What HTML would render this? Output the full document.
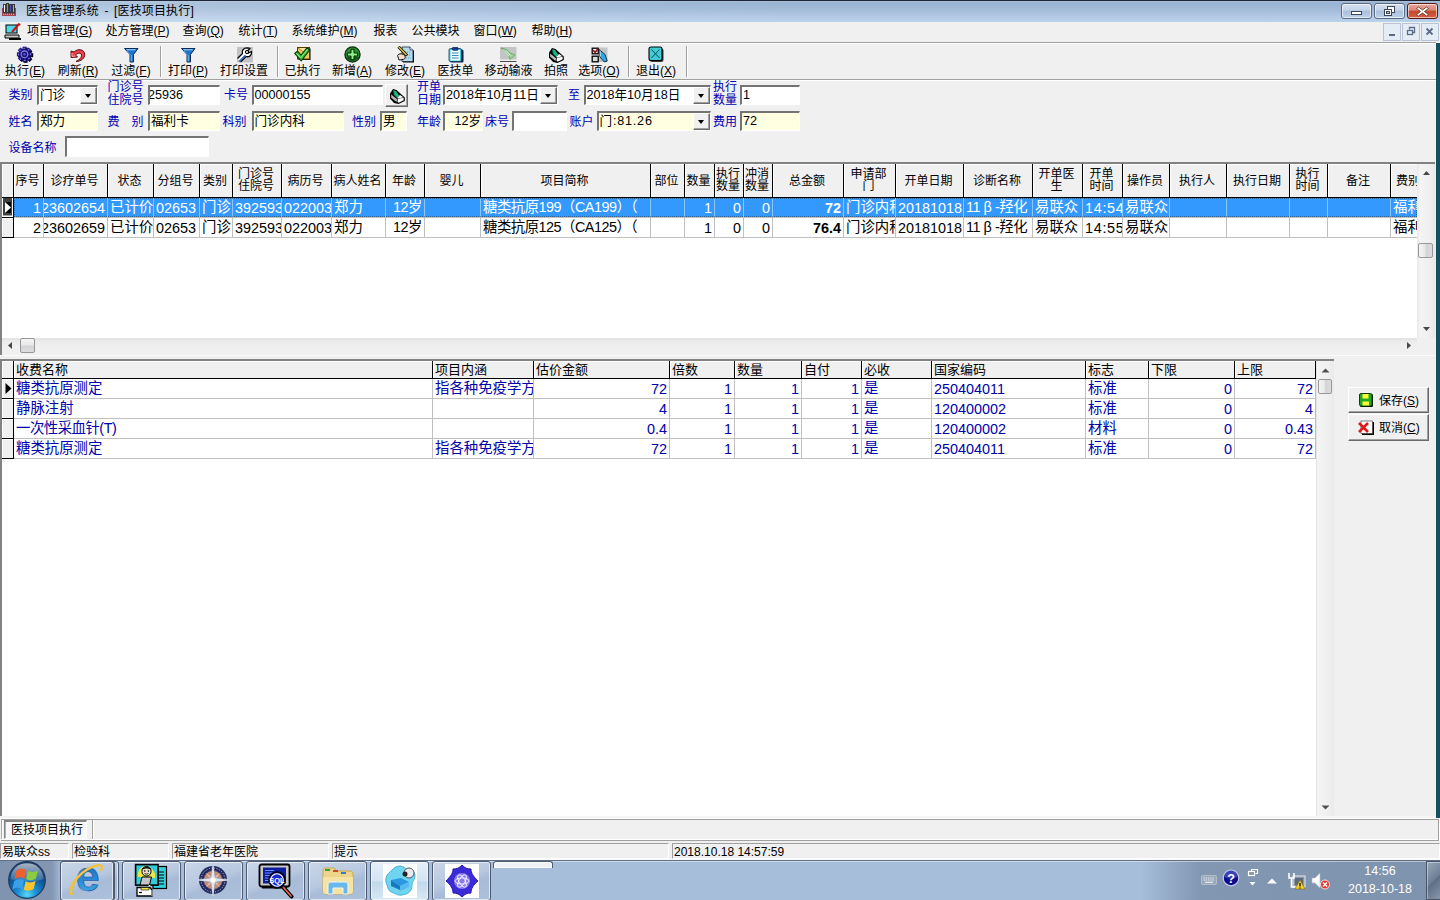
<!DOCTYPE html>
<html lang="zh"><head><meta charset="utf-8"><title>医技管理系统</title>
<style>
*{box-sizing:border-box;margin:0;padding:0}
html,body{width:1440px;height:900px;overflow:hidden;background:#f0f0f0}
body{font-family:"Liberation Sans","Noto Sans CJK SC",sans-serif;font-size:12px;color:#000;position:relative}
.a{position:absolute;white-space:nowrap;overflow:hidden}
.t{position:absolute;white-space:nowrap}
#title{left:0;top:0;width:1440px;height:22px;background:linear-gradient(#1c2637 0,#1c2637 1px,#a9bdd6 1px,#98b4d2 3px,#a3bcd9 10px,#b3c9e6 17px,#b9d3ea 22px)}
#title .cap{left:26px;top:3px;word-spacing:2px;letter-spacing:.15px;font-size:12px;line-height:16px;color:#000}
.wb{position:absolute;top:3px;height:16px;border:1px solid #5d6b80;border-radius:3px;background:linear-gradient(#d5e1f0 0,#c3d3e8 45%,#a9c0dc 50%,#bdd0e8 100%);box-shadow:inset 0 0 0 1px rgba(255,255,255,.6)}
.wb.cl{background:linear-gradient(#e9a99b 0,#d98572 45%,#c8452a 50%,#d8603f 100%);border-color:#5a1a12}
.mb{position:absolute;top:23px;height:18px;width:18px;border:1px solid #b8c4d4;background:#e4ecf6}
#menubar{left:0;top:22px;width:1440px;height:20px;background:#f0f0f0}
.mi{position:absolute;top:22px;height:18px;line-height:18px;font-size:12px;margin-left:-.5px}
.hl{position:absolute;left:0;width:1436px;height:1px}
.tb{position:absolute;top:64px;height:14px;line-height:14px;font-size:12px;text-align:center;white-space:nowrap}
.sep{position:absolute;top:46px;width:2px;height:31px;border-left:1px solid #a0a0a0;border-right:1px solid #fff}
.lbl{position:absolute;color:#0000b0;font-size:12px;line-height:12px;white-space:nowrap}
.inp{position:absolute;background:#fff;border:solid;border-width:2px 1px 1px 2px;border-color:#747474 #fff #fff #747474;font-size:12.6px;line-height:16px;padding:0 1px;white-space:nowrap;overflow:hidden}

.inp.y{background:#ffffe1}
.dd{position:absolute;right:0;top:0;bottom:0;width:17px;background:#f0f0f0;border:1px solid;border-color:#fff #6a6a6a #6a6a6a #fff;box-shadow:inset -1px -1px 0 #a0a0a0}
.dd:after{content:"";position:absolute;left:4px;top:6px;border:3.5px solid transparent;border-top:4px solid #000;border-bottom:0}
.grid{position:absolute;background:#fff;overflow:hidden}
.hc{position:absolute;background:#f0f0f0;border-right:1px solid #000;border-bottom:1px solid #000;box-shadow:inset 1px 1px 0 #fff;font-size:12px;line-height:12px;display:flex;align-items:center;justify-content:center;text-align:center;overflow:hidden;white-space:nowrap;padding-bottom:0;padding-right:2px}
.dc{position:absolute;border-right:1px solid #c0c0c0;border-bottom:1px solid #c0c0c0;font-size:14.4px;line-height:21px;overflow:hidden;white-space:nowrap;padding:0 2px;display:flex}
.dc.r{justify-content:flex-end}
.dc.c{line-height:19px}
.dc.m{letter-spacing:-.5px;line-height:19px}
.sel{background:#3399ff;color:#fff;border-color:#8cc6ff #8cc6ff #c0c0c0}
.ind{position:absolute;background:#f0f0f0;border-right:1px solid #000;border-bottom:1px solid #000;box-shadow:inset 1px 1px 0 #fff}
.sb{position:absolute;background:#f0f0f0}
.thumb{position:absolute;border:1px solid #979797;border-radius:2px;background:linear-gradient(90deg,#f5f5f5,#e8e8e9 45%,#d4d4d6 55%,#dcdcde)}
.thumbh{position:absolute;border:1px solid #979797;border-radius:2px;background:linear-gradient(#f5f5f5,#e8e8e9 45%,#d4d4d6 55%,#dcdcde)}
.btn{position:absolute;background:#f0f0f0;border:1px solid;border-color:#fff #696969 #696969 #fff;box-shadow:inset -1px -1px 0 #a0a0a0;font-size:12px}
.sp{position:absolute;top:843px;height:16px;border:1px solid;border-color:#a0a0a0 #fff #fff #a0a0a0;font-size:12px;line-height:16px;padding-left:1px;white-space:nowrap;overflow:hidden}
.tk{position:absolute;top:861px;height:40px;border:1px solid #4e5b70;border-radius:3px;background:linear-gradient(160deg,#cad6e8 0,#b9c9e0 45%,#a8bcd8 60%,#adc1dc 100%);box-shadow:inset 0 0 0 1px rgba(255,255,255,.6)}
u{text-decoration:underline}
</style></head>
<body>
<div class="a" id="title">
<svg class="t" style="left:2px;top:3px" width="15" height="14" viewBox="0 0 15 14"><rect x="0" y="5" width="14" height="8" fill="#8a1020"/><path d="M1 11h12" stroke="#fff" stroke-width="1" stroke-dasharray="1 1"/><g stroke="#000" stroke-width="1"><rect x="1.5" y="1.5" width="2" height="8.5" fill="#fff"/><rect x="4.5" y="0.5" width="2" height="9.5" fill="#b848c8"/><rect x="7.5" y="1.5" width="2" height="8.5" fill="#1a1ab8"/><rect x="10.5" y="1.5" width="2" height="8.5" fill="#b89040"/></g></svg>
<div class="t" style="left:0;top:1px;width:1440px;height:21px;background:linear-gradient(90deg,rgba(255,255,255,.22) 0,rgba(255,255,255,.1) 400px,rgba(255,255,255,0) 800px)"></div>
<div class="t cap">医技管理系统 - [医技项目执行]</div>
<div class="wb" style="left:1341px;width:31px"><svg width="29" height="14" viewBox="0 0 29 14" style="position:absolute;left:0;top:0"><rect x="9.5" y="7.5" width="10" height="3" fill="#fff" stroke="#3b4656"/></svg></div>
<div class="wb" style="left:1374px;width:31px"><svg width="29" height="14" viewBox="0 0 29 14" style="position:absolute;left:0;top:0"><rect x="12.5" y="2.5" width="7" height="6" fill="#fff" stroke="#3b4656"/><rect x="9.5" y="5.5" width="7" height="6" fill="#fff" stroke="#3b4656"/><rect x="11.5" y="7.5" width="3" height="2" fill="#c3d3e8" stroke="#3b4656"/></svg></div>
<div class="wb cl" style="left:1407px;width:31px"><svg width="29" height="14" viewBox="0 0 29 14" style="position:absolute;left:0;top:0"><path d="M10.5 3 L14.5 6 L18.5 3 L20.5 4.5 L16.5 7.5 L20.5 10.5 L18.5 12 L14.5 9 L10.5 12 L8.5 10.5 L12.5 7.5 L8.5 4.5 Z" fill="#fff" stroke="#5a2a24" stroke-width=".8"/></svg></div>
</div>
<div class="a" id="menubar"></div>
<svg class="t" style="left:4px;top:23px" width="18" height="17" viewBox="0 0 18 17"><rect x="2" y="2" width="11" height="8" fill="#4fd8e8" stroke="#000"/><path d="M1 12h14v3H1z" fill="#c8c8c8" stroke="#000"/><path d="M5 15h12v2H5z" fill="#000"/><path d="M8 9L15 1" stroke="#d01010" stroke-width="2"/><path d="M14 0l3 1-2 2z" fill="#d01010"/></svg>
<div class="mi" style="left:27.5px">项目管理(<u>G</u>)</div>
<div class="mi" style="left:106px">处方管理(<u>P</u>)</div>
<div class="mi" style="left:183px">查询(<u>Q</u>)</div>
<div class="mi" style="left:239px">统计(<u>T</u>)</div>
<div class="mi" style="left:292px">系统维护(<u>M</u>)</div>
<div class="mi" style="left:374px">报表</div>
<div class="mi" style="left:412px">公共模块</div>
<div class="mi" style="left:474px">窗口(<u>W</u>)</div>
<div class="mi" style="left:532px">帮助(<u>H</u>)</div>
<div class="mb" style="left:1383px"><svg width="15" height="15" viewBox="0 0 15 15" style="position:absolute;left:0;top:0"><rect x="5" y="10" width="6" height="2" fill="#5b6d86"/></svg></div>
<div class="mb" style="left:1402px"><svg width="15" height="15" viewBox="0 0 15 15" style="position:absolute;left:0;top:0"><path d="M6.5 5.5v-2h5v5h-2" fill="none" stroke="#5b6d86" stroke-width="1.3"/><rect x="4.5" y="6.5" width="5" height="4" fill="none" stroke="#5b6d86" stroke-width="1.3"/></svg></div>
<div class="mb" style="left:1421px"><svg width="15" height="15" viewBox="0 0 15 15" style="position:absolute;left:0;top:0"><path d="M4.5 4.5l6 6M10.5 4.5l-6 6" stroke="#5b6d86" stroke-width="1.8"/></svg></div>
<div class="hl" style="top:42px;background:#a0a0a0"></div><div class="hl" style="top:43px;background:#fff"></div>
<div class="t" style="left:15px;top:46px;width:20px;height:17px;display:flex;justify-content:center;align-items:center"><svg width="18" height="17" viewBox="0 0 18 17"><g transform="translate(9.6 9.2)" fill="#05051a"><rect x="-2" y="-7.6" width="4" height="5" transform="rotate(0)"/><rect x="-2" y="-7.6" width="4" height="5" transform="rotate(45)"/><rect x="-2" y="-7.6" width="4" height="5" transform="rotate(90)"/><rect x="-2" y="-7.6" width="4" height="5" transform="rotate(135)"/><rect x="-2" y="-7.6" width="4" height="5" transform="rotate(180)"/><rect x="-2" y="-7.6" width="4" height="5" transform="rotate(225)"/><rect x="-2" y="-7.6" width="4" height="5" transform="rotate(270)"/><rect x="-2" y="-7.6" width="4" height="5" transform="rotate(315)"/><circle r="5.5"/></g><g transform="translate(8.5 8.3)"><g fill="#18127e"><rect x="-2" y="-7.6" width="4" height="5" transform="rotate(0)"/><rect x="-2" y="-7.6" width="4" height="5" transform="rotate(45)"/><rect x="-2" y="-7.6" width="4" height="5" transform="rotate(90)"/><rect x="-2" y="-7.6" width="4" height="5" transform="rotate(135)"/><rect x="-2" y="-7.6" width="4" height="5" transform="rotate(180)"/><rect x="-2" y="-7.6" width="4" height="5" transform="rotate(225)"/><rect x="-2" y="-7.6" width="4" height="5" transform="rotate(270)"/><rect x="-2" y="-7.6" width="4" height="5" transform="rotate(315)"/></g><g fill="#8a80e8"><rect x="-1" y="-6.6" width="1.6" height="1.6" transform="rotate(0)"/><rect x="-1" y="-6.6" width="1.6" height="1.6" transform="rotate(45)"/><rect x="-1" y="-6.6" width="1.6" height="1.6" transform="rotate(90)"/><rect x="-1" y="-6.6" width="1.6" height="1.6" transform="rotate(135)"/><rect x="-1" y="-6.6" width="1.6" height="1.6" transform="rotate(180)"/><rect x="-1" y="-6.6" width="1.6" height="1.6" transform="rotate(225)"/><rect x="-1" y="-6.6" width="1.6" height="1.6" transform="rotate(270)"/><rect x="-1" y="-6.6" width="1.6" height="1.6" transform="rotate(315)"/></g><circle r="5.5" fill="#18127e"/><circle r="3.4" fill="none" stroke="#9a90f0" stroke-width="1.1"/><circle r="1.3" fill="#5a50c8"/></g></svg></div>
<div class="tb" style="left:-5px;width:60px">执行(<u>E</u>)</div>
<div class="t" style="left:68px;top:46px;width:20px;height:17px;display:flex;justify-content:center;align-items:center"><svg width="16" height="16" viewBox="0 0 16 16"><path d="M1 4L1 10.5L7.5 10L5.5 8C7.5 5.5 11 5.5 11.5 8C12 10.5 9 13 6 14.5C11 14.5 15.2 11 14.700 7C14.2 2.5 8 1 4 5Z" fill="#f04048" stroke="#5a0a10" stroke-width="1" stroke-linejoin="round"/><path d="M2 6v3.5l3.5-.5" stroke="#ff9aa0" stroke-width="1" fill="none"/></svg></div>
<div class="tb" style="left:48px;width:60px">刷新(<u>R</u>)</div>
<div class="t" style="left:121px;top:46px;width:20px;height:17px;display:flex;justify-content:center;align-items:center"><svg width="16" height="16" viewBox="0 0 16 16"><path d="M1.5 1.5h13.5L10.5 7.5v7.5h-3.5V7.5z" fill="#1e74cc" stroke="#0a2a5a" stroke-width="1" stroke-linejoin="round"/><path d="M3 2.3h10l-.8 1h-8.4z" fill="#9ad8ff"/><path d="M7.700 8h1v6.3h-1z" fill="#7cc4f8"/><path d="M4 4l3.5 4" stroke="#58a8ec" stroke-width="1"/></svg></div>
<div class="tb" style="left:101px;width:60px">过滤(<u>F</u>)</div>
<div class="t" style="left:178px;top:46px;width:20px;height:17px;display:flex;justify-content:center;align-items:center"><svg width="16" height="16" viewBox="0 0 16 16"><path d="M1.5 1.5h13.5L10.5 7.5v7.5h-3.5V7.5z" fill="#1e74cc" stroke="#0a2a5a" stroke-width="1" stroke-linejoin="round"/><path d="M3 2.3h10l-.8 1h-8.4z" fill="#9ad8ff"/><path d="M7.700 8h1v6.3h-1z" fill="#7cc4f8"/><path d="M4 4l3.5 4" stroke="#58a8ec" stroke-width="1"/></svg></div>
<div class="tb" style="left:158px;width:60px">打印(<u>P</u>)</div>
<div class="t" style="left:234px;top:46px;width:20px;height:17px;display:flex;justify-content:center;align-items:center"><svg width="17" height="16" viewBox="0 0 17 16"><rect x="1" y="0" width="16" height="15.5" fill="#c2c2c2"/><path d="M1.5 11.5L6.5 6.5C5.5 3.5 7.5 .8 11 .8L14 1.3L11.5 4L12.5 6L15.5 4.5C16 8 13.5 10.5 10 9.5L4.5 15" fill="#fff" stroke="#000" stroke-width="1.3" stroke-linejoin="round"/><path d="M3 14.5L9.5 8.3" stroke="#2a68c0" stroke-width="1.6"/><circle cx="11" cy="5" r="1.700" fill="#c2c2c2" stroke="#000" stroke-width="1"/></svg></div>
<div class="tb" style="left:214px;width:60px">打印设置</div>
<div class="t" style="left:292.5px;top:46px;width:20px;height:17px;display:flex;justify-content:center;align-items:center"><svg width="17" height="15" viewBox="0 0 17 15"><rect x="4.5" y="1.5" width="12" height="11.5" fill="#000"/><rect x="3.5" y="0.5" width="12" height="11.5" fill="#f6c860" stroke="#5a3a08"/><path d="M4 1l6 4.5L15 1" fill="#fbe29a" stroke="#8a6418" stroke-width=".7"/><path d="M.700 6.5L3.5 4.2L7 8L13 .8L15.8 3L7.2 14Z" fill="#2cba2c" stroke="#083a08" stroke-width="1.100" stroke-linejoin="round"/><path d="M2.5 6.3L6.8 10.8L13.5 2.5" fill="none" stroke="#a8f0a0" stroke-width="1"/></svg></div>
<div class="tb" style="left:272.5px;width:60px">已执行</div>
<div class="t" style="left:342px;top:46px;width:20px;height:17px;display:flex;justify-content:center;align-items:center"><svg width="17" height="17" viewBox="0 0 17 17"><circle cx="8.5" cy="8.5" r="7.6" fill="#2a9030" stroke="#062806" stroke-width="1.2"/><path d="M2.2 11a7 7 0 0 0 12.6 0z" fill="#145a18"/><path d="M7 3.3h3V7h3.700v3H10v3.700H7V10H3.3V7H7z" fill="#8aee8a" stroke="#062806" stroke-width="1"/></svg></div>
<div class="tb" style="left:322px;width:60px">新增(<u>A</u>)</div>
<div class="t" style="left:395px;top:46px;width:20px;height:17px;display:flex;justify-content:center;align-items:center"><svg width="17" height="17" viewBox="0 0 17 17"><path d="M6 2h8l3 3v11.5H6z" fill="#000"/><path d="M5 1h8l3 3v11.5H5z" fill="#b4dcf0" stroke="#1a2a3a" stroke-width=".8"/><path d="M13 1v3h3" fill="#e8f6ff" stroke="#1a2a3a" stroke-width=".7"/><path d="M8 6h6M8 9h6M9 12h5" stroke="#5a8aa0" stroke-dasharray="1 1.2"/><path d="M1.5 .8L10 9.5" stroke="#000" stroke-width="3"/><path d="M1.8 1L9.5 9" stroke="#f0c828" stroke-width="1.5"/><path d="M.5 9.5C2 7 6 7.5 7.5 9.5S8 13 6 13.5L2 14Z" fill="#f8dcc8" stroke="#000" stroke-width=".9"/></svg></div>
<div class="tb" style="left:375px;width:60px">修改(<u>E</u>)</div>
<div class="t" style="left:445.5px;top:46px;width:20px;height:17px;display:flex;justify-content:center;align-items:center"><svg width="16" height="16" viewBox="0 0 16 16"><rect x="2" y="2.5" width="13.5" height="13" rx="1.5" fill="#0a1a3a"/><rect x="1" y="1.5" width="12.5" height="13" rx="1.5" fill="#38d0e0" stroke="#0a3a58" stroke-width=".8"/><rect x="2.5" y="3" width="9.5" height="10.5" fill="#f2fcff"/><rect x="4.5" y="0.3" width="5.5" height="3" rx=".8" fill="#1a3a9a" stroke="#0a1a4a" stroke-width=".7"/><path d="M4 6h6.5M4 8.5h6.5M4 11h6.5" stroke="#3a8ab8" stroke-width="1"/></svg></div>
<div class="tb" style="left:425.5px;width:60px">医技单</div>
<div class="t" style="left:498.5px;top:46px;width:20px;height:17px;display:flex;justify-content:center;align-items:center"><svg width="17" height="16" viewBox="0 0 17 16"><rect x="0" y="0" width="16.5" height="12.5" fill="#c4c4c4"/><path d="M0 14.5h16.5" stroke="#4a4a4a" stroke-width="1"/><path d="M1 1C5 1.5 8 3 10 6L15 8L10 12.5L9 9C7 6 4 3.5 1 1Z" fill="#9ad89a" stroke="#5a9a5a" stroke-width=".7"/><path d="M3 2.5L9 9M6 3.5L10.5 8.5" stroke="#d8f4d8" stroke-width=".9"/></svg></div>
<div class="tb" style="left:478.5px;width:60px">移动输液</div>
<div class="t" style="left:546px;top:46px;width:20px;height:17px;display:flex;justify-content:center;align-items:center"><svg width="17" height="16" viewBox="0 0 17 16"><path d="M1 5.5L4 1L7.5 2L15.8 9.5L15.8 13L9.5 16L5 15L1 10.5Z" fill="#000"/><path d="M2.2 6.5L8 11.3L7.6 14L2.2 9.8Z" fill="#bcbcbc"/><path d="M8.8 10.8L14.6 9.8L14.6 12.3L9.6 14.700L8.6 13.5Z" fill="#fff"/><path d="M8 9.8L11 7L14.3 9.3L9 10.5Z" fill="#fff"/><path d="M4.3 2.3L7 3L10.3 7.8L8.2 9.8L5.2 7Z" fill="#18b888"/><path d="M4.3 2.3L5.2 7L8.2 9.8" fill="none" stroke="#0a6a4a" stroke-width=".8"/></svg></div>
<div class="tb" style="left:526px;width:60px">拍照</div>
<div class="t" style="left:589px;top:46px;width:20px;height:17px;display:flex;justify-content:center;align-items:center"><svg width="17" height="16" viewBox="0 0 17 16"><rect x="7.5" y="0.5" width="9" height="14.5" fill="#c4c4c4"/><rect x="1.2" y="1.2" width="6" height="5.6" fill="#fff" stroke="#000" stroke-width="1.3"/><path d="M2 3L4 5.5L7 1.8" stroke="#a01018" stroke-width="1.700" fill="none"/><rect x="1.2" y="9.2" width="6" height="5.6" fill="#dcdcdc" stroke="#000" stroke-width="1.3"/><path d="M8.3 2.5L14 7.5L16.2 14L13.3 15L9 10Z" fill="#30a8e4" stroke="#06263a" stroke-width=".9" stroke-linejoin="round"/><path d="M9 3.5L9.5 9.5" stroke="#a8e0ff" stroke-width="1"/></svg></div>
<div class="tb" style="left:569px;width:60px">选项(<u>O</u>)</div>
<div class="t" style="left:646px;top:46px;width:20px;height:17px;display:flex;justify-content:center;align-items:center"><svg width="16" height="17" viewBox="0 0 16 17"><rect x="2" y="2.5" width="13.5" height="13.5" rx="2" fill="#3a3a3a"/><rect x="1" y="1" width="13" height="13.5" rx="2" fill="#40ccd4" stroke="#000" stroke-width="1.100"/><path d="M3.5 3.5l8 8.500M11.5 3.5l-8 8.5" stroke="#064a58" stroke-width="1"/></svg></div>
<div class="tb" style="left:626px;width:60px">退出(<u>X</u>)</div>
<div class="sep" style="left:159.5px"></div>
<div class="sep" style="left:277px"></div>
<div class="sep" style="left:628px"></div>
<div class="sep" style="left:686px"></div>
<div class="hl" style="top:79px;background:#a0a0a0"></div><div class="hl" style="top:80px;background:#fff"></div>
<div class="lbl" style="left:8.5px;top:89px;">类别</div>
<div class="inp k" style="left:37px;top:85px;width:61px;height:20px;">门诊<div class="dd"></div></div>
<div class="lbl" style="left:107.5px;top:81px;line-height:13px">门诊号<br>住院号</div>
<div class="inp " style="left:148px;top:85px;width:72px;height:20px;"><span style="margin-left:-3px">25936</span></div>
<div class="lbl" style="left:224px;top:89px;">卡号</div>
<div class="inp " style="left:251.5px;top:85px;width:131.5px;height:20px;">00000155</div>
<div class="btn" style="left:385px;top:84px;width:23px;height:23px"><div style="position:absolute;left:3px;top:3px"><svg width="17" height="16" viewBox="0 0 17 16"><path d="M1 5.5L4 1L7.5 2L15.8 9.5L15.8 13L9.5 16L5 15L1 10.5Z" fill="#000"/><path d="M2.2 6.5L8 11.3L7.6 14L2.2 9.8Z" fill="#bcbcbc"/><path d="M8.8 10.8L14.6 9.8L14.6 12.3L9.6 14.700L8.6 13.5Z" fill="#fff"/><path d="M8 9.8L11 7L14.3 9.3L9 10.5Z" fill="#fff"/><path d="M4.3 2.3L7 3L10.3 7.8L8.2 9.8L5.2 7Z" fill="#18b888"/><path d="M4.3 2.3L5.2 7L8.2 9.8" fill="none" stroke="#0a6a4a" stroke-width=".8"/></svg></div></div>
<div class="lbl" style="left:417px;top:81px;line-height:13px">开单<br>日期</div>
<div class="inp " style="left:443px;top:85px;width:115px;height:20px;">2018年10月11日<div class="dd"></div></div>
<div class="lbl" style="left:568px;top:89px;">至</div>
<div class="inp " style="left:583.5px;top:85px;width:127.5px;height:20px;">2018年10月18日<div class="dd"></div></div>
<div class="lbl" style="left:713px;top:81px;line-height:13px">执行<br>数量</div>
<div class="inp " style="left:740px;top:85px;width:60px;height:20px;">1</div>
<div class="lbl" style="left:8.5px;top:116px;">姓名</div>
<div class="inp y k" style="left:37px;top:111px;width:61px;height:20px;">郑力</div>
<div class="lbl" style="left:107.5px;top:116px;">费&emsp;别</div>
<div class="inp y k" style="left:148px;top:111px;width:72px;height:20px;">福利卡</div>
<div class="lbl" style="left:222.5px;top:116px;">科别</div>
<div class="inp y k" style="left:251.5px;top:111px;width:92px;height:20px;">门诊内科</div>
<div class="lbl" style="left:352px;top:116px;">性别</div>
<div class="inp y k" style="left:380px;top:111px;width:27px;height:20px;">男</div>
<div class="lbl" style="left:417px;top:116px;">年龄</div>
<div class="inp y" style="left:443px;top:111px;width:40px;height:20px;text-align:right">12岁</div>
<div class="lbl" style="left:485px;top:116px;">床号</div>
<div class="inp " style="left:512px;top:111px;width:55px;height:20px;"></div>
<div class="lbl" style="left:569.5px;top:116px;">账户</div>
<div class="inp y" style="left:596.5px;top:111px;width:114.5px;height:20px;"><span style="letter-spacing:.8px">门:81.26</span><div class="dd"></div></div>
<div class="lbl" style="left:713px;top:116px;">费用</div>
<div class="inp y" style="left:740px;top:111px;width:60px;height:20px;">72</div>
<div class="lbl" style="left:8.5px;top:142px;">设备名称</div>
<div class="inp " style="left:65px;top:136px;width:144px;height:21px;"></div>
<div class="grid" style="left:0;top:162px;width:1435px;height:193px;border-left:2px solid #828282;border-top:2px solid #828282">
<div class="hc" style="left:0;top:0;width:12px;height:34px"></div>
<div class="hc" style="left:12px;top:0;width:30px;height:34px"><span>序号</span></div>
<div class="hc" style="left:42px;top:0;width:64px;height:34px"><span>诊疗单号</span></div>
<div class="hc" style="left:106px;top:0;width:46px;height:34px"><span>状态</span></div>
<div class="hc" style="left:152px;top:0;width:46px;height:34px"><span>分组号</span></div>
<div class="hc" style="left:198px;top:0;width:33px;height:34px"><span>类别</span></div>
<div class="hc" style="left:231px;top:0;width:49px;height:34px;padding-bottom:2px"><span>门诊号<br>住院号</span></div>
<div class="hc" style="left:280px;top:0;width:50px;height:34px"><span>病历号</span></div>
<div class="hc" style="left:330px;top:0;width:54px;height:34px"><span>病人姓名</span></div>
<div class="hc" style="left:384px;top:0;width:39px;height:34px"><span>年龄</span></div>
<div class="hc" style="left:423px;top:0;width:56px;height:34px"><span>婴儿</span></div>
<div class="hc" style="left:479px;top:0;width:170px;height:34px"><span>项目简称</span></div>
<div class="hc" style="left:649px;top:0;width:34px;height:34px"><span>部位</span></div>
<div class="hc" style="left:683px;top:0;width:30px;height:34px"><span>数量</span></div>
<div class="hc" style="left:713px;top:0;width:29px;height:34px;padding-bottom:2px"><span>执行<br>数量</span></div>
<div class="hc" style="left:742px;top:0;width:29px;height:34px;padding-bottom:2px"><span>冲消<br>数量</span></div>
<div class="hc" style="left:771px;top:0;width:71px;height:34px"><span>总金额</span></div>
<div class="hc" style="left:842px;top:0;width:52px;height:34px;padding-bottom:2px"><span>申请部<br>门</span></div>
<div class="hc" style="left:894px;top:0;width:68px;height:34px"><span>开单日期</span></div>
<div class="hc" style="left:962px;top:0;width:69px;height:34px"><span>诊断名称</span></div>
<div class="hc" style="left:1031px;top:0;width:50px;height:34px;padding-bottom:2px"><span>开单医<br>生</span></div>
<div class="hc" style="left:1081px;top:0;width:40px;height:34px;padding-bottom:2px"><span>开单<br>时间</span></div>
<div class="hc" style="left:1121px;top:0;width:47px;height:34px"><span>操作员</span></div>
<div class="hc" style="left:1168px;top:0;width:57px;height:34px"><span>执行人</span></div>
<div class="hc" style="left:1225px;top:0;width:63px;height:34px"><span>执行日期</span></div>
<div class="hc" style="left:1288px;top:0;width:38px;height:34px;padding-bottom:2px"><span>执行<br>时间</span></div>
<div class="hc" style="left:1326px;top:0;width:63px;height:34px"><span>备注</span></div>
<div class="hc" style="left:1389px;top:0;width:37px;height:34px"><span>费别</span></div>
<div class="ind" style="left:0;top:34px;width:12px;height:20px;background:#fff;box-shadow:none"><svg width="11" height="19" viewBox="0 0 11 19" style="position:absolute;left:0;top:0"><rect x="1" y="0" width="9" height="17.5" fill="#404040"/><rect x="3" y="4" width="6" height="11" fill="#000"/><path d="M3 4v11l6-5.5z" fill="#fff"/></svg></div>
<div class="dc r sel" style="left:12px;top:34px;width:30px;height:20px"><span>1</span></div>
<div class="dc r sel" style="left:42px;top:34px;width:64px;height:20px"><span>123602654</span></div>
<div class="dc sel c" style="left:106px;top:34px;width:46px;height:20px"><span>已计价</span></div>
<div class="dc sel" style="left:152px;top:34px;width:46px;height:20px"><span>02653</span></div>
<div class="dc sel c" style="left:198px;top:34px;width:33px;height:20px"><span>门诊</span></div>
<div class="dc sel" style="left:231px;top:34px;width:49px;height:20px"><span>3925933</span></div>
<div class="dc sel" style="left:280px;top:34px;width:50px;height:20px"><span>0220033</span></div>
<div class="dc sel c" style="left:330px;top:34px;width:54px;height:20px"><span>郑力</span></div>
<div class="dc r sel m" style="left:384px;top:34px;width:39px;height:20px"><span>12岁</span></div>
<div class="dc sel" style="left:423px;top:34px;width:56px;height:20px"><span></span></div>
<div class="dc sel m" style="left:479px;top:34px;width:170px;height:20px"><span>糖类抗原199（CA199）（</span></div>
<div class="dc sel" style="left:649px;top:34px;width:34px;height:20px"><span></span></div>
<div class="dc r sel" style="left:683px;top:34px;width:30px;height:20px"><span>1</span></div>
<div class="dc r sel" style="left:713px;top:34px;width:29px;height:20px"><span>0</span></div>
<div class="dc r sel" style="left:742px;top:34px;width:29px;height:20px"><span>0</span></div>
<div class="dc r sel" style="left:771px;top:34px;width:71px;height:20px"><span><b>72</b></span></div>
<div class="dc sel c" style="left:842px;top:34px;width:52px;height:20px"><span>门诊内科</span></div>
<div class="dc sel" style="left:894px;top:34px;width:68px;height:20px"><span>20181018</span></div>
<div class="dc sel m" style="left:962px;top:34px;width:69px;height:20px"><span>11<span style="display:inline-block;width:15px;text-align:center">β</span>-羟化</span></div>
<div class="dc sel c" style="left:1031px;top:34px;width:50px;height:20px"><span>易联众</span></div>
<div class="dc sel" style="left:1081px;top:34px;width:40px;height:20px"><span><span style="letter-spacing:.7px">14:54:</span></span></div>
<div class="dc sel c" style="left:1121px;top:34px;width:47px;height:20px"><span>易联众</span></div>
<div class="dc sel" style="left:1168px;top:34px;width:57px;height:20px"><span></span></div>
<div class="dc sel" style="left:1225px;top:34px;width:63px;height:20px"><span></span></div>
<div class="dc sel" style="left:1288px;top:34px;width:38px;height:20px"><span></span></div>
<div class="dc sel" style="left:1326px;top:34px;width:63px;height:20px"><span></span></div>
<div class="dc sel c" style="left:1389px;top:34px;width:37px;height:20px"><span>福利卡</span></div>
<div class="ind" style="left:0;top:54px;width:12px;height:20px"></div>
<div class="dc r" style="left:12px;top:54px;width:30px;height:20px"><span>2</span></div>
<div class="dc r" style="left:42px;top:54px;width:64px;height:20px"><span>123602659</span></div>
<div class="dc c" style="left:106px;top:54px;width:46px;height:20px"><span>已计价</span></div>
<div class="dc" style="left:152px;top:54px;width:46px;height:20px"><span>02653</span></div>
<div class="dc c" style="left:198px;top:54px;width:33px;height:20px"><span>门诊</span></div>
<div class="dc" style="left:231px;top:54px;width:49px;height:20px"><span>3925933</span></div>
<div class="dc" style="left:280px;top:54px;width:50px;height:20px"><span>0220033</span></div>
<div class="dc c" style="left:330px;top:54px;width:54px;height:20px"><span>郑力</span></div>
<div class="dc r m" style="left:384px;top:54px;width:39px;height:20px"><span>12岁</span></div>
<div class="dc" style="left:423px;top:54px;width:56px;height:20px"><span></span></div>
<div class="dc m" style="left:479px;top:54px;width:170px;height:20px"><span>糖类抗原125（CA125）（</span></div>
<div class="dc" style="left:649px;top:54px;width:34px;height:20px"><span></span></div>
<div class="dc r" style="left:683px;top:54px;width:30px;height:20px"><span>1</span></div>
<div class="dc r" style="left:713px;top:54px;width:29px;height:20px"><span>0</span></div>
<div class="dc r" style="left:742px;top:54px;width:29px;height:20px"><span>0</span></div>
<div class="dc r" style="left:771px;top:54px;width:71px;height:20px"><span><b>76.4</b></span></div>
<div class="dc c" style="left:842px;top:54px;width:52px;height:20px"><span>门诊内科</span></div>
<div class="dc" style="left:894px;top:54px;width:68px;height:20px"><span>20181018</span></div>
<div class="dc m" style="left:962px;top:54px;width:69px;height:20px"><span>11<span style="display:inline-block;width:15px;text-align:center">β</span>-羟化</span></div>
<div class="dc c" style="left:1031px;top:54px;width:50px;height:20px"><span>易联众</span></div>
<div class="dc" style="left:1081px;top:54px;width:40px;height:20px"><span><span style="letter-spacing:.7px">14:55:</span></span></div>
<div class="dc c" style="left:1121px;top:54px;width:47px;height:20px"><span>易联众</span></div>
<div class="dc" style="left:1168px;top:54px;width:57px;height:20px"><span></span></div>
<div class="dc" style="left:1225px;top:54px;width:63px;height:20px"><span></span></div>
<div class="dc" style="left:1288px;top:54px;width:38px;height:20px"><span></span></div>
<div class="dc" style="left:1326px;top:54px;width:63px;height:20px"><span></span></div>
<div class="dc c" style="left:1389px;top:54px;width:37px;height:20px"><span>福利卡</span></div>
</div>
<div class="t" style="left:14px;top:198px;width:1403px;height:19px;border:1px dotted #1a1a1a;opacity:.4"></div>
<div class="sb" style="left:1417px;top:164px;width:18.5px;height:174px;background:linear-gradient(90deg,#e8e8e8 0,#f4f4f4 3px,#f0f0f0 12px,#eaeaea 18px)"><svg width="18" height="174" style="position:absolute;left:0;top:0"><path d="M6 11l3.5-4 3.5 4z" fill="#484848"/><path d="M6 163l3.5 4 3.5-4z" fill="#484848"/></svg><div class="thumb" style="left:1px;top:79px;width:15px;height:15px"></div></div>
<div class="sb" style="left:2px;top:338px;width:1415px;height:17px;background:linear-gradient(#e2e2e2 0,#ececec 4px,#f0f0f0 9px)"><svg width="1415" height="17" style="position:absolute;left:0;top:0"><path d="M10 4l-4 3.5 4 3.5z" fill="#484848"/><path d="M1405 4l4 3.5-4 3.5z" fill="#484848"/></svg><div class="thumbh" style="left:18px;top:0px;width:15px;height:15px"></div></div>
<div class="t" style="left:0;top:355px;width:1435px;height:1px;background:#fbfbfb"></div>
<div class="sb" style="left:1417px;top:338px;width:18px;height:17px"></div>
<div class="grid" style="left:0;top:359px;width:1334px;height:457px;border-left:2px solid #828282;border-top:2px solid #828282">
<div class="hc" style="left:0;top:0;width:12px;height:18px"></div>
<div class="hc" style="left:12px;top:0;width:419px;height:18px;justify-content:flex-start;padding-left:2px;font-size:13px"><span>收费名称</span></div>
<div class="hc" style="left:431px;top:0;width:101px;height:18px;justify-content:flex-start;padding-left:2px;font-size:13px"><span>项目内涵</span></div>
<div class="hc" style="left:532px;top:0;width:136px;height:18px;justify-content:flex-start;padding-left:2px;font-size:13px"><span>估价金额</span></div>
<div class="hc" style="left:668px;top:0;width:65px;height:18px;justify-content:flex-start;padding-left:2px;font-size:13px"><span>倍数</span></div>
<div class="hc" style="left:733px;top:0;width:67px;height:18px;justify-content:flex-start;padding-left:2px;font-size:13px"><span>数量</span></div>
<div class="hc" style="left:800px;top:0;width:60px;height:18px;justify-content:flex-start;padding-left:2px;font-size:13px"><span>自付</span></div>
<div class="hc" style="left:860px;top:0;width:70px;height:18px;justify-content:flex-start;padding-left:2px;font-size:13px"><span>必收</span></div>
<div class="hc" style="left:930px;top:0;width:154px;height:18px;justify-content:flex-start;padding-left:2px;font-size:13px"><span>国家编码</span></div>
<div class="hc" style="left:1084px;top:0;width:63px;height:18px;justify-content:flex-start;padding-left:2px;font-size:13px"><span>标志</span></div>
<div class="hc" style="left:1147px;top:0;width:86px;height:18px;justify-content:flex-start;padding-left:2px;font-size:13px"><span>下限</span></div>
<div class="hc" style="left:1233px;top:0;width:81px;height:18px;justify-content:flex-start;padding-left:2px;font-size:13px"><span>上限</span></div>
<div class="ind" style="left:0;top:18px;width:12px;height:20px"><svg width="11" height="19" viewBox="0 0 11 19" style="position:absolute;left:0;top:0"><path d="M3.5 4v11l6-5.5z" fill="#000"/></svg></div>
<div class="dc c" style="left:12px;top:18px;width:419px;height:20px;color:#0000a8"><span>糖类抗原测定</span></div>
<div class="dc c" style="left:431px;top:18px;width:101px;height:20px;color:#0000a8"><span>指各种免疫学方法</span></div>
<div class="dc r" style="left:532px;top:18px;width:136px;height:20px;color:#0000a8"><span>72</span></div>
<div class="dc r" style="left:668px;top:18px;width:65px;height:20px;color:#0000a8"><span>1</span></div>
<div class="dc r" style="left:733px;top:18px;width:67px;height:20px;color:#0000a8"><span>1</span></div>
<div class="dc r" style="left:800px;top:18px;width:60px;height:20px;color:#0000a8"><span>1</span></div>
<div class="dc c" style="left:860px;top:18px;width:70px;height:20px;color:#0000a8"><span>是</span></div>
<div class="dc" style="left:930px;top:18px;width:154px;height:20px;color:#0000a8"><span>250404011</span></div>
<div class="dc c" style="left:1084px;top:18px;width:63px;height:20px;color:#0000a8"><span>标准</span></div>
<div class="dc r" style="left:1147px;top:18px;width:86px;height:20px;color:#0000a8"><span>0</span></div>
<div class="dc r" style="left:1233px;top:18px;width:81px;height:20px;color:#0000a8"><span>72</span></div>
<div class="ind" style="left:0;top:38px;width:12px;height:20px"></div>
<div class="dc c" style="left:12px;top:38px;width:419px;height:20px;color:#0000a8"><span>静脉注射</span></div>
<div class="dc" style="left:431px;top:38px;width:101px;height:20px;color:#0000a8"><span></span></div>
<div class="dc r" style="left:532px;top:38px;width:136px;height:20px;color:#0000a8"><span>4</span></div>
<div class="dc r" style="left:668px;top:38px;width:65px;height:20px;color:#0000a8"><span>1</span></div>
<div class="dc r" style="left:733px;top:38px;width:67px;height:20px;color:#0000a8"><span>1</span></div>
<div class="dc r" style="left:800px;top:38px;width:60px;height:20px;color:#0000a8"><span>1</span></div>
<div class="dc c" style="left:860px;top:38px;width:70px;height:20px;color:#0000a8"><span>是</span></div>
<div class="dc" style="left:930px;top:38px;width:154px;height:20px;color:#0000a8"><span>120400002</span></div>
<div class="dc c" style="left:1084px;top:38px;width:63px;height:20px;color:#0000a8"><span>标准</span></div>
<div class="dc r" style="left:1147px;top:38px;width:86px;height:20px;color:#0000a8"><span>0</span></div>
<div class="dc r" style="left:1233px;top:38px;width:81px;height:20px;color:#0000a8"><span>4</span></div>
<div class="ind" style="left:0;top:58px;width:12px;height:20px"></div>
<div class="dc m" style="left:12px;top:58px;width:419px;height:20px;color:#0000a8"><span>一次性采血针(T)</span></div>
<div class="dc" style="left:431px;top:58px;width:101px;height:20px;color:#0000a8"><span></span></div>
<div class="dc r" style="left:532px;top:58px;width:136px;height:20px;color:#0000a8"><span>0.4</span></div>
<div class="dc r" style="left:668px;top:58px;width:65px;height:20px;color:#0000a8"><span>1</span></div>
<div class="dc r" style="left:733px;top:58px;width:67px;height:20px;color:#0000a8"><span>1</span></div>
<div class="dc r" style="left:800px;top:58px;width:60px;height:20px;color:#0000a8"><span>1</span></div>
<div class="dc c" style="left:860px;top:58px;width:70px;height:20px;color:#0000a8"><span>是</span></div>
<div class="dc" style="left:930px;top:58px;width:154px;height:20px;color:#0000a8"><span>120400002</span></div>
<div class="dc c" style="left:1084px;top:58px;width:63px;height:20px;color:#0000a8"><span>材料</span></div>
<div class="dc r" style="left:1147px;top:58px;width:86px;height:20px;color:#0000a8"><span>0</span></div>
<div class="dc r" style="left:1233px;top:58px;width:81px;height:20px;color:#0000a8"><span>0.43</span></div>
<div class="ind" style="left:0;top:78px;width:12px;height:20px"></div>
<div class="dc c" style="left:12px;top:78px;width:419px;height:20px;color:#0000a8"><span>糖类抗原测定</span></div>
<div class="dc c" style="left:431px;top:78px;width:101px;height:20px;color:#0000a8"><span>指各种免疫学方法</span></div>
<div class="dc r" style="left:532px;top:78px;width:136px;height:20px;color:#0000a8"><span>72</span></div>
<div class="dc r" style="left:668px;top:78px;width:65px;height:20px;color:#0000a8"><span>1</span></div>
<div class="dc r" style="left:733px;top:78px;width:67px;height:20px;color:#0000a8"><span>1</span></div>
<div class="dc r" style="left:800px;top:78px;width:60px;height:20px;color:#0000a8"><span>1</span></div>
<div class="dc c" style="left:860px;top:78px;width:70px;height:20px;color:#0000a8"><span>是</span></div>
<div class="dc" style="left:930px;top:78px;width:154px;height:20px;color:#0000a8"><span>250404011</span></div>
<div class="dc c" style="left:1084px;top:78px;width:63px;height:20px;color:#0000a8"><span>标准</span></div>
<div class="dc r" style="left:1147px;top:78px;width:86px;height:20px;color:#0000a8"><span>0</span></div>
<div class="dc r" style="left:1233px;top:78px;width:81px;height:20px;color:#0000a8"><span>72</span></div>
</div>
<div class="sb" style="left:1316px;top:361px;width:18px;height:455px;border-left:1px solid #e4e4e4;background:linear-gradient(90deg,#f4f4f4 0,#f0f0f0 10px,#eaeaea 17px)"><svg width="17" height="455" style="position:absolute;left:0;top:0"><path d="M4.5 11.5l4-4 4 4z" fill="#505050"/><path d="M4.5 444.5l4 4 4-4z" fill="#505050"/></svg><div class="thumb" style="left:1px;top:18px;width:14px;height:14.5px"></div></div>
<div class="btn" style="left:1348px;top:387px;width:81px;height:26px"><svg style="position:absolute;left:10px;top:5px" width="15" height="15" viewBox="0 0 15 15"><rect x="1" y="1" width="13" height="13" rx="1.5" fill="#000"/><rect x="0.5" y="0.5" width="12.5" height="12.5" rx="1.5" fill="#22a822" stroke="#0a400a"/><rect x="3.5" y="1" width="6" height="4.5" fill="#ffff40"/><rect x="3.5" y="8.5" width="6.5" height="4" fill="#ffff40"/></svg><div class="t" style="left:30px;top:6px;line-height:14px">保存(<u>S</u>)</div></div>
<div class="btn" style="left:1348px;top:414px;width:81px;height:27px"><svg style="position:absolute;left:9px;top:5px" width="17" height="16" viewBox="0 0 17 16"><rect x="4" y="2" width="12" height="13" fill="#000"/><rect x="3" y="1" width="11.5" height="12.5" fill="#fff" stroke="#333" stroke-width=".6"/><path d="M1 3l9 9M10 3l-9 9" stroke="#e01818" stroke-width="2.6"/></svg><div class="t" style="left:30px;top:6px;line-height:14px">取消(<u>C</u>)</div></div>
<div class="t" style="left:1436px;top:43px;width:4px;height:775px;background:#14505f"></div>
<div class="t" style="left:0;top:816px;width:1436px;height:3px;background:#f5f5f5"></div>
<div class="t" style="left:0;top:818px;width:1440px;height:1px;background:#fff"></div>
<div class="t" style="left:1px;top:819px;width:1438px;height:22px;border:1px solid #a0a0a0;border-left:0;background:#f0f0f0;box-shadow:1px 0 0 #fff,inset 0 -1px 0 #fff;border-bottom:1px solid #a0a0a0"></div>
<div class="t" style="left:1px;top:820px;width:3px;height:19px;border-left:1px solid #a8a8a8;background:#fff;border-right:1px solid #f0f0f0"></div>
<div class="t" style="left:4px;top:820px;width:83px;height:19px;border:1px solid;border-width:2px 1px 1px 1px;border-color:#848484 #fff #fff #848484;background:#f8f8f8;box-shadow:inset 1px 0 0 #b0b0b0"></div><div class="t" style="left:92px;top:820px;width:2px;height:19px;border-left:1px solid #a0a0a0;border-right:1px solid #fff"></div>
<div class="t" style="left:11px;top:823px;line-height:14px;font-size:12px">医技项目执行</div>
<div class="t" style="left:0;top:841px;width:1440px;height:19px;background:#f0f0f0"></div>
<div class="t" style="left:0;top:859px;width:1440px;height:1px;background:#fafafa"></div>
<div class="sp" style="left:0px;width:69px">易联众ss</div>
<div class="sp" style="left:72px;width:97px">检验科</div>
<div class="sp" style="left:172px;width:157px">福建省老年医院</div>
<div class="sp" style="left:332px;width:337px">提示</div>
<div class="sp" style="left:672px;width:768px">2018.10.18 14:57:59</div>
<div class="t" style="left:0;top:860px;width:1440px;height:40px;background:linear-gradient(90deg,#a7bedb 0,#a7bedb 1140px,#8197b2 1200px,#7d93ae 1440px);border-top:1px solid #5f6f86;box-shadow:inset 0 1px 0 rgba(255,255,255,.45)"></div>
<div class="t" style="left:0;top:861px;width:62px;height:39px;background:linear-gradient(90deg,#7f93ae 0,#8397b2 52px,#a7bedb 62px)"></div>
<svg class="t" style="left:7px;top:860px" width="40" height="40" viewBox="0 0 40 40"><defs><radialGradient id="og" cx=".5" cy=".9" r=".85"><stop offset="0" stop-color="#5ad8fa"/><stop offset=".3" stop-color="#1a90d8"/><stop offset=".62" stop-color="#115a9c"/><stop offset="1" stop-color="#1c3c66"/></radialGradient><linearGradient id="oh" x1="0" y1="0" x2="0" y2="1"><stop offset="0" stop-color="#fff" stop-opacity=".62"/><stop offset="1" stop-color="#fff" stop-opacity=".12"/></linearGradient></defs><circle cx="20" cy="20" r="18.3" fill="url(#og)" stroke="#1e3a5c" stroke-width="1.2"/><path d="M3.5 19C4 9 11 3.2 20 3.2S36 9 36.5 19C30 22 10 22 3.5 19Z" fill="url(#oh)"/><path d="M9.5 10.5c3.5-2.2 6.5-2.2 9.8-.3l-1.8 8.3c-3.3-1.700-6.3-1.700-9.8.4z" fill="#f0602a"/><path d="M21 10.8c3.3 1.700 6.3 1.6 9.8-.6l-1.8 8.3c-3.5 2.2-6.5 2.3-9.8.6z" fill="#8ccc3e"/><path d="M7.2 21c3.5-2.2 6.5-2.2 9.8-.4l-1.8 8.3c-3.3-1.700-6.3-1.700-9.8.4z" fill="#3aa0e8"/><path d="M18.700 21.3c3.3 1.700 6.3 1.700 9.8-.5l-1.8 8.3c-3.5 2.2-6.5 2.2-9.8.5z" fill="#fbc42c"/></svg>
<div class="tk" style="left:60px;width:54px;"></div>
<div class="tk" style="left:121.5px;width:59px;"></div>
<div class="tk" style="left:183.5px;width:59px;"></div>
<div class="tk" style="left:245.5px;width:59px;"></div>
<div class="tk" style="left:307.5px;width:59px;"></div>
<div class="tk" style="left:369.5px;width:59px;background:linear-gradient(#e4eef8 0,#d4e4f2 50%,#c0d8ec 52%,#d6e8f4 100%);"></div>
<div class="tk" style="left:431.5px;width:59px;"></div>
<div class="tk" style="left:62px;width:57px;border-radius:3px"></div><div class="tk" style="left:62px;width:53px"></div><div class="tk" style="left:60px;width:54px"></div>
<div class="tk" style="left:493px;width:60px;height:7px;border-bottom:0;border-radius:3px 3px 0 0;background:#eef2f7"></div>
<svg class="t" style="left:68px;top:862px" width="38" height="36" viewBox="0 0 38 36"><defs><linearGradient id="ieg" x1="0" y1="0" x2="0" y2="1"><stop offset="0" stop-color="#1a5aa8"/><stop offset=".55" stop-color="#2a86d4"/><stop offset="1" stop-color="#48b8f0"/></linearGradient></defs><path d="M3.5 32C1 27 7 15 19 8" fill="none" stroke="#e8b830" stroke-width="2.6" stroke-linecap="round"/><text x="19.700" y="29.3" font-family="Liberation Sans" font-weight="bold" font-size="43" text-anchor="middle" fill="url(#ieg)" stroke="#154a8c" stroke-width=".5">e</text><path d="M3.5 32C0 24 14 6 30 3.2c4-.6 5 1.8 3 4.8" fill="none" stroke="#f0c440" stroke-width="2.4" stroke-linecap="round"/></svg>
<svg class="t" style="left:134px;top:863px" width="34" height="34" viewBox="0 0 34 34"><rect x="19" y="3.5" width="13.5" height="22" fill="#30d0dc" stroke="#000" stroke-width="1.2"/><path d="M24 9h6M24 12h6M24 15h6M24 18h6M24 21h6" stroke="#000" stroke-width="1.100"/><rect x="1.6" y="1.6" width="22.5" height="20.5" fill="#34ccd8" stroke="#000" stroke-width="1.6"/><path d="M4 14C3 7 8 2.5 13 3.5S22 9 21 15Z" fill="#f0e840"/><ellipse cx="12.5" cy="8.3" rx="4.6" ry="4.8" fill="#e8dcc0" stroke="#000" stroke-width="1"/><path d="M7.700 7C8 3 17 3 17.3 7C15 5 10 5 7.700 7Z" fill="#000"/><circle cx="10.8" cy="8" r=".8"/><circle cx="14.4" cy="8" r=".8"/><path d="M10.5 10.5q2 1.5 4 0" fill="none" stroke="#000" stroke-width=".8"/><path d="M8 14h9.5l-2 8H6Z" fill="#c4c4c4" stroke="#000" stroke-width="1"/><path d="M15.5 22v6" stroke="#fff" stroke-width="1.6"/><path d="M3 24.5h13l2 2.5v6H3Z" fill="#fff" stroke="#000" stroke-width="1.3"/><path d="M7 24.5h8v2.5H7Z" fill="#f0e840" stroke="#000" stroke-width=".6"/><path d="M18 27v6" stroke="#a0a0a0" stroke-width="1.4"/><path d="M5 29.5h3" stroke="#000" stroke-width="1.2"/></svg>
<svg class="t" style="left:196px;top:863px" width="34" height="34" viewBox="0 0 34 34"><circle cx="17" cy="17" r="14" fill="#232a5e"/><circle cx="17" cy="17" r="12" fill="none" stroke="#c8cce8" stroke-width="1" stroke-dasharray="1 1.6"/><circle cx="17" cy="17" r="9.5" fill="#c88c72"/><circle cx="17" cy="17" r="9.5" fill="none" stroke="#3a3f78" stroke-width=".8"/><path d="M17 7l1.5 8.500L27 17l-8.5 1.5L17 27l-1.5-8.5L7 17l8.5-1.5z" fill="#e8d8d0" opacity=".7" transform="rotate(45 17 17)"/><path d="M17 .5l2.3 14.2L33.5 17l-14.2 2.3L17 33.5l-2.3-14.2L.5 17l14.2-2.3z" fill="#d4d8e2" stroke="#8a90a8" stroke-width=".5"/><path d="M17 .5L17 33.5M.5 17L33.5 17" stroke="#f8f8ff" stroke-width=".8"/><circle cx="17" cy="17" r="2.6" fill="#fff"/></svg>
<svg class="t" style="left:258px;top:863px" width="36" height="36" viewBox="0 0 36 36"><rect x="1.5" y="1.5" width="30" height="22" rx="2" fill="#c8c8c8" stroke="#000" stroke-width="1.8"/><rect x="5" y="4.5" width="23" height="16" fill="#0c1c9c"/><path d="M7 7.5h9M7 10h7M7 12.5h8M7 15h6M7 17.5h7" stroke="#6a90ff" stroke-width="1"/><path d="M4 24.5h25" stroke="#000" stroke-width="2"/><path d="M25 24l8.5 9.5" stroke="#000" stroke-width="4" stroke-linecap="round"/><path d="M25.5 24.5l7.5 8.5" stroke="#e86a50" stroke-width="1.8" stroke-linecap="round"/><circle cx="19" cy="17" r="8" fill="#1a2ad0" stroke="#000" stroke-width="1.6"/><circle cx="19" cy="17" r="6.3" fill="none" stroke="#fff" stroke-width="1.100"/><text x="19" y="20" font-size="7.5" font-weight="bold" fill="#fff" text-anchor="middle" font-family="Liberation Sans">SQL</text></svg>
<svg class="t" style="left:321px;top:865px" width="34" height="32" viewBox="0 0 34 32"><path d="M2 6c0-2 1-3 3-3h8l3 3h13c2 0 3 1 3 3v17c0 2-1 3-3 3H5c-2 0-3-1-3-3z" fill="#ecd58a" stroke="#c9a94a"/><rect x="4" y="4" width="5" height="2" fill="#3aa03a"/><rect x="12" y="5" width="5" height="2" fill="#d0482a"/><rect x="20" y="7" width="5" height="2" fill="#3a78d0"/><path d="M2 12h30v14c0 2-1 3-3 3H5c-2 0-3-1-3-3z" fill="#f4e3a2"/><path d="M7 29v-9c0-2 1-3 3-3h14c2 0 3 1 3 3v9h-5v-6H12v6z" fill="#6ab8ea" stroke="#e8f6ff" stroke-width="1"/></svg>
<svg class="t" style="left:383px;top:864px" width="34" height="34" viewBox="0 0 34 34"><rect x="0" y="0" width="34" height="34" fill="#fff"/><path d="M17 2c4 0 5 3 9 4s6 2 6 6-3 5-3 9-2 8-6 9-6 2-10 0-7-2-8-6-3-6-2-10 3-5 6-8 5-4 8-4z" fill="#6fd4ee" stroke="#48b4d8"/><path d="M8 16l10-2 8 4-9 4z" fill="#2a98e0"/><path d="M8 16v6l9 4v-4z" fill="#1a78c0"/><path d="M17 22l9-4v5l-9 4z" fill="#58b8f0"/><circle cx="26" cy="9" r="5" fill="#e8e8f0" stroke="#555"/><circle cx="22" cy="10" r="2.5" fill="#222"/></svg>
<svg class="t" style="left:445px;top:864px" width="34" height="34" viewBox="0 0 34 34"><rect x="0" y="0" width="34" height="34" fill="#fff"/><path d="M17 1c3 3 5 4 9 4 0 4 2 7 7 12-5 4-7 8-7 12-4 0-6 1-9 4-3-3-5-4-9-4 0-4-2-8-7-12C6 12 8 9 8 5c4 0 6-1 9-4z" fill="#3a2ad8" stroke="#2a1aa8"/><circle cx="17" cy="17" r="8" fill="#8a7af0"/><g fill="none" stroke="#fff" stroke-width=".8"><ellipse cx="17" cy="17" rx="7" ry="3"/><ellipse cx="17" cy="17" rx="7" ry="3" transform="rotate(60 17 17)"/><ellipse cx="17" cy="17" rx="7" ry="3" transform="rotate(120 17 17)"/></g></svg>
<svg class="t" style="left:1200px;top:870px" width="18" height="16" viewBox="0 0 18 16"><path d="M5.5 4c2.5-2.5 4.5.5 8-2" fill="none" stroke="#8a96a8" stroke-width=".9"/><rect x="1.5" y="5.5" width="15" height="9" rx="1.8" fill="#9aa8bc" stroke="#b4bcc8" stroke-width="1.100"/><path d="M3.5 8h11M3.5 10h11" stroke="#e8ecf2" stroke-width="1.100" stroke-dasharray="1.4 .8"/><path d="M5 12.3h8" stroke="#e8ecf2" stroke-width="1.100"/></svg>
<svg class="t" style="left:1222px;top:869px" width="18" height="18" viewBox="0 0 18 18"><circle cx="9" cy="9" r="7.8" fill="#0c0c8c" stroke="#c4c8e8" stroke-width="1.2"/><path d="M2.5 8a6.5 6.5 0 0 1 13 0c-4 2-9 2-13 0z" fill="#4a54c8" opacity=".75"/><text x="9" y="13.6" font-size="12.5" font-weight="bold" fill="#fff" text-anchor="middle" font-family="Liberation Sans">?</text></svg>
<svg class="t" style="left:1247px;top:868px" width="12" height="20" viewBox="0 0 12 20"><path d="M4.5 3.5v-2h6v4h-2" fill="none" stroke="#fff" stroke-width="1.2"/><rect x="1.5" y="3.5" width="6" height="4" fill="none" stroke="#fff" stroke-width="1.2"/><path d="M2.5 14h6l-3 3.5z" fill="#fff"/></svg>
<svg class="t" style="left:1266px;top:877px" width="12" height="8" viewBox="0 0 12 8"><path d="M1 6.5l5-5 5 5z" fill="#fff"/></svg>
<svg class="t" style="left:1287px;top:872px" width="20" height="18" viewBox="0 0 20 18"><rect x="6" y="4" width="12" height="11" fill="#8a98a8" stroke="#e8ecf2"/><rect x="8" y="6" width="8" height="7" fill="#5a6a80"/><path d="M2 1v5h5V1M4.5 6v9h4" fill="none" stroke="#fff" stroke-width="1.6"/><path d="M13 8l5 9H8z" fill="#f6d02a" stroke="#8a6a00" stroke-width=".6"/><path d="M13 11v3.500M13 15.5v1" stroke="#000" stroke-width="1.2"/></svg>
<svg class="t" style="left:1311px;top:872px" width="20" height="18" viewBox="0 0 20 18"><path d="M1 6h3l5-5v15l-5-5H1z" fill="#fff" stroke="#aeb6c4" stroke-width=".6"/><circle cx="14" cy="12.5" r="4.5" fill="#e03a30" stroke="#fff" stroke-width=".8"/><path d="M12 10.5l4 4M16 10.5l-4 4" stroke="#fff" stroke-width="1.4"/></svg>
<div class="t" style="left:1340px;top:864px;width:80px;text-align:center;color:#fff;font-size:12.5px;line-height:15px">14:56</div>
<div class="t" style="left:1340px;top:882px;width:80px;text-align:center;color:#fff;font-size:12.5px;line-height:15px">2018-10-18</div>
<div class="t" style="left:1426px;top:861px;width:14px;height:39px;border:1px solid #4a5668;border-right:0;background:linear-gradient(135deg,#9aa8bc 0,#6e7e94 50%,#5e6e84 51%,#8696ac 100%);box-shadow:inset 1px 1px 0 rgba(255,255,255,.4)"></div>
</body></html>
